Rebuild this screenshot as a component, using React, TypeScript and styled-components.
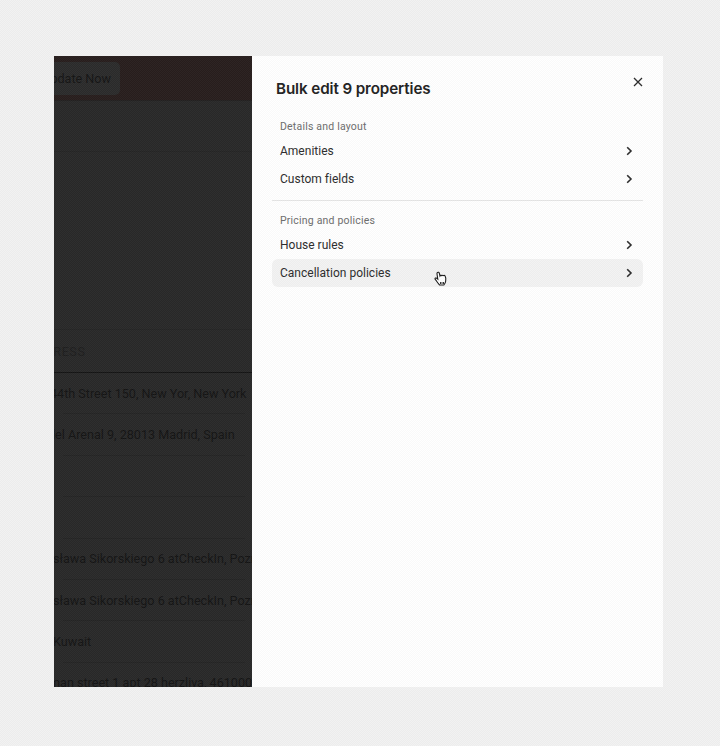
import React from 'react';
import styled, { createGlobalStyle } from 'styled-components';

const GlobalStyle = createGlobalStyle`
html, body {
  margin: 0;
  padding: 0;
  background: #f2f2f2;
}
body {
  font-family: Roboto, "Liberation Sans", sans-serif;
}
`;
const Page = styled.div`
width: 720px;
height: 746px;
box-sizing: border-box;
padding: 56px 57px 59px 54px;
`;
const Dither = styled.div`
position: fixed;
inset: 0;
pointer-events: none;
background-image: conic-gradient(rgba(0, 0, 0, 0.025) 25%, rgba(255, 255, 255, 0.03) 0 50%, rgba(0, 0, 0, 0.025) 0 75%, rgba(255, 255, 255, 0.03) 0);
background-size: 2px 2px;
`;
const Frame = styled.div`
width: 609px;
height: 631px;
display: flex;
overflow: hidden;
`;
const Backdrop = styled.div`
width: 198px;
flex-shrink: 0;
background-color: #292929;
display: flex;
flex-direction: column;
overflow: hidden;
color: #141414;
font-size: 12.6px;
white-space: nowrap;
`;
const Banner = styled.div`
height: 44px;
flex-shrink: 0;
background-color: #281e1d;
border-bottom: 1px solid #232121;
display: flex;
align-items: center;
`;
const UpdateButton = styled.div`
width: 57px;
height: 33px;
border-radius: 0 5px 5px 0;
background-color: #2c2c2c;
display: flex;
align-items: center;
justify-content: flex-end;
padding-right: 9px;
flex-shrink: 0;
`;
const BlankBand = styled.div`
height: 50px;
flex-shrink: 0;
border-bottom: 1px solid #252525;
`;
const HeaderSpace = styled.div`
height: 177px;
flex-shrink: 0;
border-bottom: 1px solid #252525;
`;
const ColumnHead = styled.div`
height: 43px;
flex-shrink: 0;
box-sizing: border-box;
border-bottom: 1px solid #141414;
display: flex;
align-items: center;
color: #1e1e1e;
font-size: 12.5px;
letter-spacing: 0.6px;
`;
const TableRow = styled.div`
height: 41.4px;
flex-shrink: 0;
box-sizing: border-box;
margin: 0 7px 0 9px;
border-bottom: 1px solid #242424;
display: flex;
align-items: center;
`;
const RowText = styled.span<{ $shift: number }>`
margin-left: ${(p) => p.$shift}px;
`;
const Panel = styled.div`
position: relative;
flex: 1;
background-color: #ffffff;
padding: 22px 20px 0;
color: #2a2a2a;
`;
const TitleRow = styled.div`
display: flex;
align-items: center;
justify-content: space-between;
height: 20px;
padding: 0 0 0 4px;
margin-bottom: 21px;
`;
const Title = styled.div`
font-family: Inter, "Liberation Sans", sans-serif;
font-size: 15.2px;
line-height: 21px;
font-weight: 600;
letter-spacing: -0.1px;
color: #222222;
`;
const CloseButton = styled.div`
width: 12px;
height: 12px;
display: flex;
margin: -12px -1px 0 0;
`;
const Group = styled.div`
display: flex;
flex-direction: column;
`;
const GroupLabel = styled.div`
font-size: 10.5px;
line-height: 15px;
letter-spacing: 0.2px;
color: #6d6d6d;
padding-left: 8px;
margin-bottom: 3px;
`;
const Item = styled.div<{ $hover?: boolean }>`
height: 28px;
box-sizing: border-box;
padding: 0 8px 1px;
border-radius: 6px;
background-color: ${(p) => (p.$hover ? '#f3f3f3' : 'transparent')};
display: flex;
align-items: center;
justify-content: space-between;
font-size: 12px;
letter-spacing: 0.01px;
color: #2d2d2d;
`;
const Divider = styled.div`
height: 1px;
background-color: #e6e6e6;
margin: 7px 0 12px;
`;
const Cursor = styled.svg`
position: absolute;
left: 182px;
top: 215px;
`;

const Chevron = () => (
  <svg width="8" height="10" viewBox="0 0 8 10" fill="none" style={{ marginRight: 2 }}>
    <path d="M2.2 1.2 6 5 2.2 8.8" stroke="#2b2b2b" strokeWidth="1.6" />
  </svg>
);

const rows = [
  { text: '44th Street 150, New Yor, New York', shift: -13 },
  { text: 'del Arenal 9, 28013 Madrid, Spain', shift: -15 },
  { text: '', shift: 0 },
  { text: '', shift: 0 },
  { text: 'isława Sikorskiego 6 atCheckIn, Poznań', shift: -13 },
  { text: 'isława Sikorskiego 6 atCheckIn, Poznań', shift: -13 },
  { text: 'Kuwait', shift: -10 },
  { text: 'man street 1 apt 28 herzliya, 4610000', shift: -14 },
];

const App = () => {
  return (
    <Page>
      <GlobalStyle />
      <Frame>
        <Backdrop>
          <Banner>
            <UpdateButton>Update Now</UpdateButton>
          </Banner>
          <BlankBand />
          <HeaderSpace />
          <ColumnHead>
            <RowText $shift={-27}>ADDRESS</RowText>
          </ColumnHead>
          {rows.map((row, i) => (
            <TableRow key={i}>
              <RowText $shift={row.shift}>{row.text}</RowText>
            </TableRow>
          ))}
        </Backdrop>
        <Panel>
          <TitleRow>
            <Title>Bulk edit 9 properties</Title>
            <CloseButton>
              <svg width="12" height="12" viewBox="0 0 12 12" fill="none">
                <path d="M2 2l8 8M10 2l-8 8" stroke="#2b2b2b" strokeWidth="1.3" />
              </svg>
            </CloseButton>
          </TitleRow>
          <Group>
            <GroupLabel>Details and layout</GroupLabel>
            <Item>
              Amenities
              <Chevron />
            </Item>
            <Item>
              Custom fields
              <Chevron />
            </Item>
          </Group>
          <Divider />
          <Group>
            <GroupLabel>Pricing and policies</GroupLabel>
            <Item>
              House rules
              <Chevron />
            </Item>
            <Item $hover>
              Cancellation policies
              <Chevron />
            </Item>
          </Group>
          <Cursor width="14" height="16" viewBox="0 0 14 16">
            <path
              d="M3.5 1.5c.8-.6 1.6-.2 1.8.6l.7 3 .4-.6c.5-.5 1.1-.4 1.5.1.4-.5 1.2-.5 1.6 0 .5-.3 1.2-.2 1.6.4.6 1 .9 3 .6 5-.2 1.6-.9 3-1.8 4H5.6c-1.2-1-2.4-3-3.6-4.7-.5-.7-1.2-1.2-1-1.9.2-.6 1-.6 1.6-.2l1.2 1L3 3c-.1-.6 0-1.200.5-1.500z"
              fill="#ffffff"
              stroke="#1a1a1a"
              strokeWidth="1.1"
            />
            <path d="M6.500 11v2M8 11v2M9.500 11v2" stroke="#1a1a1a" strokeWidth="0.9" />
          </Cursor>
        </Panel>
      </Frame>
      <Dither />
    </Page>
  );
};

export default App;
